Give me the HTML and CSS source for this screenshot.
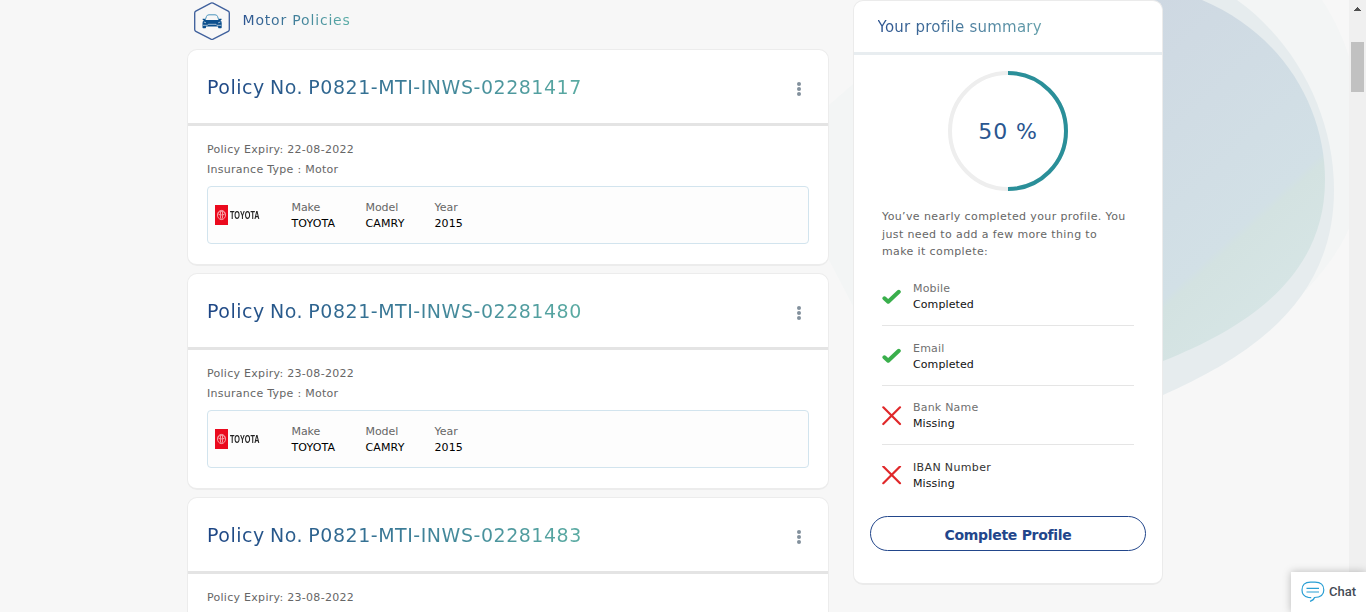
FILE: index.html
```
<!DOCTYPE html>
<html lang="en">
<head>
<meta charset="utf-8">
<title>Motor Policies</title>
<link rel="stylesheet" href="styles.css">
</head>
<body>
<svg class="backdrop" viewBox="0 0 1366 612" aria-hidden="true">
  <defs>
    <linearGradient id="blob" gradientUnits="userSpaceOnUse" x1="1150" y1="0" x2="1361" y2="229">
      <stop offset="0" stop-color="#ced8e2"/><stop offset=".735" stop-color="#d2e0e6"/><stop offset=".76" stop-color="#d3e2e1"/><stop offset="1" stop-color="#d6e5e5"/>
    </linearGradient>
  </defs>
  <path fill="#f3f5f5" d="M1322 0C1350 42 1366 100 1364 165C1360 220 1340 252 1311 285C1250 350 1200 375 1163 395L1000 420L853 306L829 260V105L853 84L1000 0Z"/>
  <path fill="#e6ecee" d="M1237 0C1296 42 1334 115 1334 190C1334 305 1245 358 1163 395L1000 300V0Z"/>
  <path fill="url(#blob)" d="M1202 0C1285 35 1325 110 1325 180C1325 275 1250 326 1163 361L1000 300V0Z"/>
</svg>
<div class="page">
  <main class="policies">
    <h2 class="section-title">
      <svg class="hex" width="38" height="39" viewBox="0 0 38 39">
        <path d="M18.9 1.9Q19.5 1.9 20.1 2.2L35.2 10.1Q36.3 10.8 36.3 12V28.5Q36.3 29.7 35.2 30.3L20.1 38.2Q19 38.7 17.9 38.2L2.8 30.3Q1.7 29.7 1.7 28.5V12Q1.7 10.8 2.8 10.1L17.9 2.2Q18.4 1.9 18.9 1.9Z" fill="none" stroke="#40619d" stroke-width="1.35"/>
        <g transform="translate(0 1)">
        <path d="M12.2 18L13.5 14.4Q14 12.8 16 12.8H22Q24 12.8 24.5 14.4L25.8 18" fill="none" stroke="#4b94bd" stroke-width="1"/>
        <path fill="#0b4e8c" d="M9.7 16.7H11.7L12.4 18H25.6L26.3 16.7H28.5V18H27.3Q28.7 19 28.7 21V25.6Q28.7 26.2 28 26.2H25.8Q25.1 26.2 25.1 25.3V24.6H13V25.3Q13 26.2 12.3 26.2H10.1Q9.5 26.2 9.5 25.6V21Q9.5 19 11 18H9.7Z"/>
        <path stroke="#c8d9e6" stroke-width=".8" fill="none" d="M10.8 20L13 20.8M27.4 20L25.2 20.8M10 23.3H14.5L15.3 22.3H23L23.8 23.3H28.3"/>
        </g>
      </svg>
      <span class="grad section-label">Motor Policies</span>
    </h2>

    <section class="policy">
      <header class="policy-head"><h3 class="grad policy-no">Policy No. P0821-MTI-INWS-02281417</h3><span class="dots"><i></i><i></i><i></i></span></header>
      <div class="policy-body">
        <p class="expiry">Policy Expiry: 22-08-2022</p><p class="type">Insurance Type : Motor</p>
        <div class="vehicle">
          <div class="brand"><svg width="13" height="20" viewBox="0 0 13 20"><path fill="#eb0a1e" d="M0 0H13V20H0Z"/><g fill="none" stroke="#f7a0a6" stroke-width="1"><ellipse cx="6.5" cy="10" rx="4" ry="4.6"/><ellipse cx="6.5" cy="8.2" rx="3.6" ry="1.7"/><ellipse cx="6.5" cy="10" rx="1.2" ry="4.3"/></g></svg><span class="wordmark">TOYOTA</span></div>
          <dl class="make"><dt>Make</dt><dd>TOYOTA</dd></dl><dl class="model"><dt>Model</dt><dd>CAMRY</dd></dl><dl class="year"><dt>Year</dt><dd>2015</dd></dl>
        </div>
      </div>
    </section>

    <section class="policy">
      <header class="policy-head"><h3 class="grad policy-no">Policy No. P0821-MTI-INWS-02281480</h3><span class="dots"><i></i><i></i><i></i></span></header>
      <div class="policy-body">
        <p class="expiry">Policy Expiry: 23-08-2022</p><p class="type">Insurance Type : Motor</p>
        <div class="vehicle">
          <div class="brand"><svg width="13" height="20" viewBox="0 0 13 20"><path fill="#eb0a1e" d="M0 0H13V20H0Z"/><g fill="none" stroke="#f7a0a6" stroke-width="1"><ellipse cx="6.5" cy="10" rx="4" ry="4.6"/><ellipse cx="6.5" cy="8.2" rx="3.6" ry="1.7"/><ellipse cx="6.5" cy="10" rx="1.2" ry="4.3"/></g></svg><span class="wordmark">TOYOTA</span></div>
          <dl class="make"><dt>Make</dt><dd>TOYOTA</dd></dl><dl class="model"><dt>Model</dt><dd>CAMRY</dd></dl><dl class="year"><dt>Year</dt><dd>2015</dd></dl>
        </div>
      </div>
    </section>

    <section class="policy">
      <header class="policy-head"><h3 class="grad policy-no">Policy No. P0821-MTI-INWS-02281483</h3><span class="dots"><i></i><i></i><i></i></span></header>
      <div class="policy-body">
        <p class="expiry">Policy Expiry: 23-08-2022</p>
      </div>
    </section>
  </main>

  <aside class="profile">
    <header class="profile-head"><h3 class="grad profile-title">Your profile summary</h3></header>
    <div class="profile-body">
      <div class="ring">
        <svg width="120" height="120" viewBox="0 0 120 120"><circle cx="60" cy="60" r="58" fill="none" stroke="#eee" stroke-width="4"/><path d="M60 2A58 58 0 0 1 60 118" fill="none" stroke="#2a8f99" stroke-width="4"/></svg>
        <span class="percent">50 %</span>
      </div>
      <p class="note">You’ve nearly completed your profile. You<br>just need to add a few more thing to<br>make it complete:</p>
      <ul class="checks">
        <li><svg width="20" height="20" viewBox="0 0 20 20"><path class="tick" d="M2.4 11.3L6.2 14.7L16.8 4.8"/></svg><div><span class="muted">Mobile</span><b>Completed</b></div></li>
        <li><svg width="20" height="20" viewBox="0 0 20 20"><path class="tick" d="M2.4 11.3L6.2 14.7L16.8 4.8"/></svg><div><span class="muted">Email</span><b>Completed</b></div></li>
        <li><svg width="20" height="20" viewBox="0 0 20 20"><path class="cross" d="M1.3 1.3L18 18M18 1.3L1.3 18"/></svg><div><span class="muted">Bank Name</span><b>Missing</b></div></li>
        <li><svg width="20" height="20" viewBox="0 0 20 20"><path class="cross" d="M1.3 .5L18 17.2M18 .5L1.3 17.2"/></svg><div><span>IBAN Number</span><b>Missing</b></div></li>
      </ul>
      <button class="complete">Complete Profile</button>
    </div>
  </aside>
</div>
<div class="scrollbar"><svg width="17" height="17" viewBox="0 0 17 17"><path fill="#505050" d="M5 11V10H6V9H7V8H8V7H9V8H10V9H11V10H12V11Z"/></svg><div class="thumb"></div></div>
<div class="chat">
  <svg width="24" height="22" viewBox="0 0 24 22" fill="none" stroke="#2a9fd4" stroke-width="1.2"><path d="M9 20.3Q12.5 19.5 13.5 16.5Q22.8 16.3 22.8 9Q22.8 1.2 14 1.2H9.5Q1 1.2 1 9Q1 15.3 7.3 16.3L10.2 16.6"/><path d="M5.5 7.4H18M5.5 11H18"/></svg>
  <span>Chat</span>
</div>
</body>
</html>
```
FILE: styles.css
```
* { box-sizing: border-box; margin: 0; padding: 0; }
body {
  width: 1366px; height: 612px; overflow: hidden; background: #f7f7f7;
  font: 11px/16px Verdana, "DejaVu Sans", sans-serif; color: #000;
}
h2, h3, b { font-weight: normal; }
.backdrop { position: absolute; inset: 0; width: 1366px; height: 612px; }
.page { position: relative; display: flex; align-items: flex-start; gap: 24px; height: 612px; padding-left: 187px; overflow: hidden; }
.grad { background-clip: text; -webkit-background-clip: text; color: transparent; white-space: nowrap; }

.policies { width: 642px; flex: none; }
.section-title { display: flex; align-items: center; height: 49px; padding: 0 0 8px 6px; }
.section-label { margin: 0 0 1px 11.5px; font-size: 14px; line-height: 20px; letter-spacing: .82px; background-image: linear-gradient(90deg, #2c5490, #5aaea6); }
.policy { height: 217px; margin-bottom: 7px; background: #fff; border: 1px solid #ececec; border-bottom-width: 2px; border-radius: 10px; }
.policy-head { display: flex; justify-content: space-between; align-items: center; height: 76px; padding: 0 27px 0 19px; border-bottom: 3px solid #e4e4e4; }
.policy-no { font-size: 19px; line-height: 28px; letter-spacing: .53px; word-spacing: -1.4px; background-image: linear-gradient(90deg, #1c4484, #3d7f98 55%, #5aaba2); }
.dots { display: grid; gap: 1px; padding-top: 5px; }
.dots i { width: 4px; height: 4px; border-radius: 50%; background: #82909c; }
.policy-body { padding: 14px 19px 0; color: #666; }
.policy-body p { height: 20px; line-height: 20px; white-space: nowrap; letter-spacing: .28px; }
.vehicle { display: flex; align-items: center; width: 602px; height: 58px; margin-top: 6px; padding-left: 7.4px; background: #fdfdfd; border: 1px solid #d2e4ee; border-radius: 4px; }
.brand { display: flex; align-items: center; gap: 2px; width: 76px; }
.wordmark { font: bold 11px/16px "Liberation Sans", sans-serif; color: #222; transform: scaleX(.66); transform-origin: left; }
dl { padding-top: 1px; white-space: nowrap; }
dd { color: #000; letter-spacing: .15px; }
.make { width: 74px; }
.model { width: 69px; }

.profile { width: 310px; height: 585px; flex: none; background: #fff; border: 1px solid #ebebeb; border-bottom-width: 2px; border-radius: 10px; }
.profile-head { display: flex; align-items: center; height: 54px; padding-left: 23.5px; border-bottom: 3px solid #e8edf0; }
.profile-title { font-size: 15px; line-height: 22px; letter-spacing: .23px; background-image: linear-gradient(90deg, #2d548f, #649fab); }
.profile-body { padding: 16px 16px 0; }
.ring { display: grid; width: 120px; height: 120px; margin: 0 0 0 78px; place-items: center; }
.ring > * { grid-area: 1 / 1; }
.percent { padding-top: 1px; font-size: 22px; line-height: 28px; letter-spacing: .9px; color: #2a5690; white-space: nowrap; }
.note { margin: 17px 0 0 12px; line-height: 17.5px; letter-spacing: .38px; color: #666; white-space: nowrap; }
.checks { width: 252px; margin: 6px 0 0 12px; list-style: none; }
.checks li { display: flex; align-items: center; height: 59.5px; padding-top: 2px; border-bottom: 1px solid #e5e5e5; }
.checks li:last-child { border-bottom: 0; }
.checks li:nth-child(2) div { padding-top: 1px; }
.checks svg { flex: none; width: 20px; margin: 0 11px 0 0; }
.checks div { display: grid; color: #333; letter-spacing: .36px; white-space: nowrap; }
.checks b { color: #111; letter-spacing: .1px; }
.checks .muted { color: #707070; letter-spacing: .2px; }
.tick { fill: none; stroke: #3aaf4c; stroke-width: 4; stroke-linecap: round; stroke-linejoin: round; }
.cross { fill: none; stroke: #e0282a; stroke-width: 2.2; stroke-linecap: round; }
.complete { display: block; width: 276px; height: 35px; margin-top: 11px; padding-top: 3px; border: 1px solid #22468b; border-radius: 18px; background: #fff; color: #22468b; font: bold 14px/20px Verdana, "DejaVu Sans", sans-serif; letter-spacing: -.3px; }

/* page scrollbar and floating chat launcher sit over the page */
.scrollbar { position: absolute; top: 0; right: 0; width: 17px; height: 612px; background: rgba(239, 239, 239, .85); }
.scrollbar svg { display: block; height: 17px; }
.thumb { width: 13px; height: 50px; margin: 25px 0 0 2px; background: #c1c1c1; }
.chat { position: absolute; right: 0; bottom: 0; display: flex; align-items: center; gap: 4px; width: 75px; height: 40px; padding-left: 10px; background: #fff; box-shadow: 0 0 8px rgba(0, 0, 0, .25); color: #444b55; font: 500 13px/20px Roboto, sans-serif; }
```
